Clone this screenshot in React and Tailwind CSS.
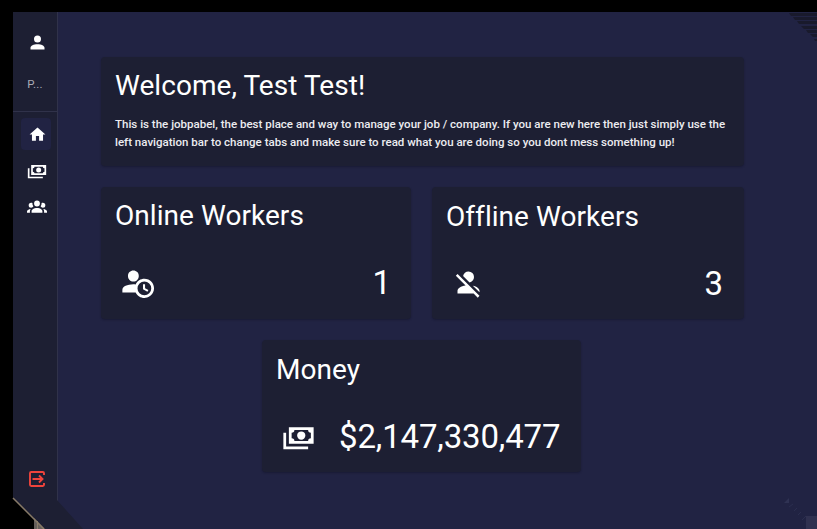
const ICONS = {
  account:
    'M12,4A4,4 0 0,1 16,8A4,4 0 0,1 12,12A4,4 0 0,1 8,8A4,4 0 0,1 12,4M12,14C16.42,14 20,15.79 20,18V20H4V18C4,15.79 7.58,14 12,14Z',
  home: 'M10,20V14H14V20H19V12H22L12,3L2,12H5V20H10Z',
  cash:
    'M5,6H23V18H5V6M14,9A3,3 0 0,1 17,12A3,3 0 0,1 14,15A3,3 0 0,1 11,12A3,3 0 0,1 14,9M9,8A2,2 0 0,1 7,10V14A2,2 0 0,1 9,16H19A2,2 0 0,1 21,14V10A2,2 0 0,1 19,8H9M1,10H3V20H19V22H1V10Z',
  group:
    'M12,5.5A3.5,3.5 0 0,1 15.5,9A3.5,3.5 0 0,1 12,12.5A3.5,3.5 0 0,1 8.5,9A3.5,3.5 0 0,1 12,5.5M5,8C5.56,8 6.08,8.15 6.53,8.42C6.38,9.85 6.8,11.27 7.66,12.38C7.16,13.34 6.16,14 5,14A3,3 0 0,1 2,11A3,3 0 0,1 5,8M19,8A3,3 0 0,1 22,11A3,3 0 0,1 19,14C17.84,14 16.84,13.34 16.34,12.38C17.2,11.27 17.62,9.85 17.47,8.42C17.92,8.15 18.44,8 19,8M5.5,18.25C5.5,16.18 8.41,14.5 12,14.5C15.59,14.5 18.5,16.18 18.5,18.25V20H5.5V18.25M0,20V18.5C0,17.11 1.89,15.94 4.45,15.6C3.86,16.28 3.5,17.22 3.5,18.25V20H0M24,20H20.5V18.25C20.5,17.22 20.14,16.28 19.55,15.6C22.11,15.94 24,17.11 24,18.5V20Z',
  clock:
    'M10.63,14.1C12.23,10.58 16.38,9.03 19.9,10.63C23.42,12.23 24.97,16.38 23.37,19.9C22.24,22.4 19.75,24 17,24C14.3,24 11.83,22.44 10.67,20H1V18C1.06,16.86 1.84,15.93 3.34,15.18C4.84,14.43 6.72,14.04 9,14C9.57,14 10.11,14.05 10.63,14.1V14.1M9,4C10.12,4.03 11.06,4.42 11.81,5.17C12.56,5.92 12.93,6.86 12.93,8C12.93,9.14 12.56,10.08 11.81,10.83C11.06,11.58 10.12,11.95 9,11.95C7.88,11.95 6.94,11.58 6.19,10.83C5.44,10.08 5.07,9.14 5.07,8C5.07,6.86 5.44,5.92 6.19,5.17C6.94,4.42 7.88,4.03 9,4M17,22A5,5 0 0,0 22,17A5,5 0 0,0 17,12A5,5 0 0,0 12,17A5,5 0 0,0 17,22M16,14H17.5V16.82L19.94,18.23L19.19,19.53L16,17.69V14Z',
  off:
    'M12,4A4,4 0 0,1 16,8C16,9.95 14.6,11.58 12.75,11.93L8.07,7.25C8.42,5.4 10.05,4 12,4M12.28,14L18.28,20L20,21.72L18.73,23L15.73,20H4V18C4,16.16 6.5,14.61 9.87,14.14L2.78,7.05L4.05,5.78L12.28,14M20,18V19.18L15.14,14.32C18,14.93 20,16.35 20,18Z',
};

function Icon({ name, className }) {
  return (
    <svg viewBox="0 0 24 24" fill="currentColor" className={`shrink-0 ${className}`}>
      <path d={ICONS[name]} />
    </svg>
  );
}

function ExitIcon() {
  return (
    <svg viewBox="0 0 18 18" fill="none" stroke="currentColor" strokeWidth="1.9" className="h-[18px] w-[18px] text-[#f0443c]">
      <path d="M16 5V3.2Q16 2 14.8 2H3.2Q2 2 2 3.2V14.8Q2 16 3.2 16H14.8Q16 16 16 14.8V13" />
      <path d="M4.5 9H14.5M11 5.5L14.5 9L11 12.5" />
    </svg>
  );
}

const CARD = 'rounded-[4px] bg-[#1d1f33] shadow-[0_1px_2px_rgba(12,12,28,0.35)]';
const TITLE = 'text-[28px] leading-9 tracking-[0.05px]';

function Sidebar() {
  return (
    <nav className="flex w-[45px] shrink-0 flex-col items-center border-r border-[#30324a] bg-[#1d1f33]">
      <div className="flex h-[100px] w-full flex-col items-center border-b border-[#30324a] pt-5">
        <Icon name="account" className="ml-1 h-[21px] w-[21px]" />
        <span className="mt-[23px] text-[11.5px] leading-4 tracking-[0.2px] text-[#a9aab5]">P...</span>
      </div>
      <div className="mt-[6px] ml-0.5 flex h-8 w-[30px] items-center justify-center rounded-[4px] bg-[#212343]">
        <Icon name="home" className="ml-[2px] h-[19px] w-[19px]" />
      </div>
      <Icon name="cash" className="mt-[10px] ml-[4px] h-[20px] w-[20px]" />
      <Icon name="group" className="mt-4 ml-[3px] h-[20px] w-[20px]" />
      <div className="mt-auto mb-[41px] ml-1">
        <ExitIcon />
      </div>
    </nav>
  );
}

function Corners() {
  return (
    <svg width="817" height="529" className="pointer-events-none absolute top-0 left-0">
      <path d="M57 500L83 529H44L13 498H57Z" fill="#1d1f33" />
      <path d="M13 498L45 529H13Z" fill="#000" />
      <path d="M34 518L45 529H34Z" fill="#665f5b" />
      <path d="M37.5 521V529" stroke="#8a7d6b" />
      <path d="M13 498L44 529" stroke="#877a68" strokeWidth="1.5" />
      <g fill="#191a2c">
        <path d="M789 13H817V16H791ZM793 17H817V20H795ZM797 21H817V24H799ZM801 26H817V29H804ZM806 30H817V33H808ZM810 34H817V37H813ZM814 39H817V41H815Z" />
      </g>
      <path d="M784 503L789 498V503Z" fill="#2f3253" />
      <path d="M789 507L793 504M794 511L797 508M798 515L801 512M802 520L806 516" stroke="#2b2e4f" />
      <rect x="806" y="516" width="11" height="13" fill="#303150" />
    </svg>
  );
}

export default function App() {
  return (
    <div className="relative flex h-[529px] w-[817px] overflow-hidden bg-black pt-3 pl-[13px] font-['Roboto',sans-serif] text-white">
      <Sidebar />
      <main className="flex-1 bg-[#212343] pt-[45px] pl-[43px]">
        <div className="flex w-[643px] flex-col">
          <section className={`h-[109px] pl-3.5 ${CARD}`}>
            <h1 className={`pt-[11px] ${TITLE}`}>Welcome, Test Test!</h1>
            <p className="mt-[11px] text-[11.52px] leading-[18px] font-medium whitespace-nowrap text-[#ececf0]">
              This is the jobpabel, the best place and way to manage your job / company. If you are new here then just simply use the
              <br />
              left navigation bar to change tabs and make sure to read what you are doing so you dont mess something up!
            </p>
          </section>
          <div className="mt-[21px] flex gap-[21px]">
            <section className={`h-[132px] w-[310px] px-3.5 ${CARD}`}>
              <h2 className={`pt-[11px] ${TITLE}`}>Online Workers</h2>
              <div className="mt-[29px] flex items-center justify-between pr-1.5 pl-[6px]">
                <Icon name="clock" className="-mt-[3px] h-[33px] w-[33px]" />
                <span className="text-[33px] leading-10">1</span>
              </div>
            </section>
            <section className={`h-[132px] w-[312px] px-3.5 ${CARD}`}>
              <h2 className={`pt-[12px] ${TITLE}`}>Offline Workers</h2>
              <div className="mt-[29px] flex items-center justify-between pr-[7px] pl-[6px]">
                <Icon name="off" className="-mt-[4px] h-[33px] w-[33px]" />
                <span className="text-[33px] leading-10">3</span>
              </div>
            </section>
          </div>
          <section className={`mt-[21px] ml-[161px] h-[132px] w-[319px] pl-3.5 ${CARD}`}>
            <h2 className={`pt-[12px] ${TITLE}`}>Money</h2>
            <div className="mt-[29px] flex items-center pl-[6px]">
              <Icon name="cash" className="-mt-[3px] h-[33px] w-[33px]" />
              <span className="ml-6 text-[33px] leading-10 tracking-[-0.15px]">$2,147,330,477</span>
            </div>
          </section>
        </div>
      </main>
      <Corners />
    </div>
  );
}
